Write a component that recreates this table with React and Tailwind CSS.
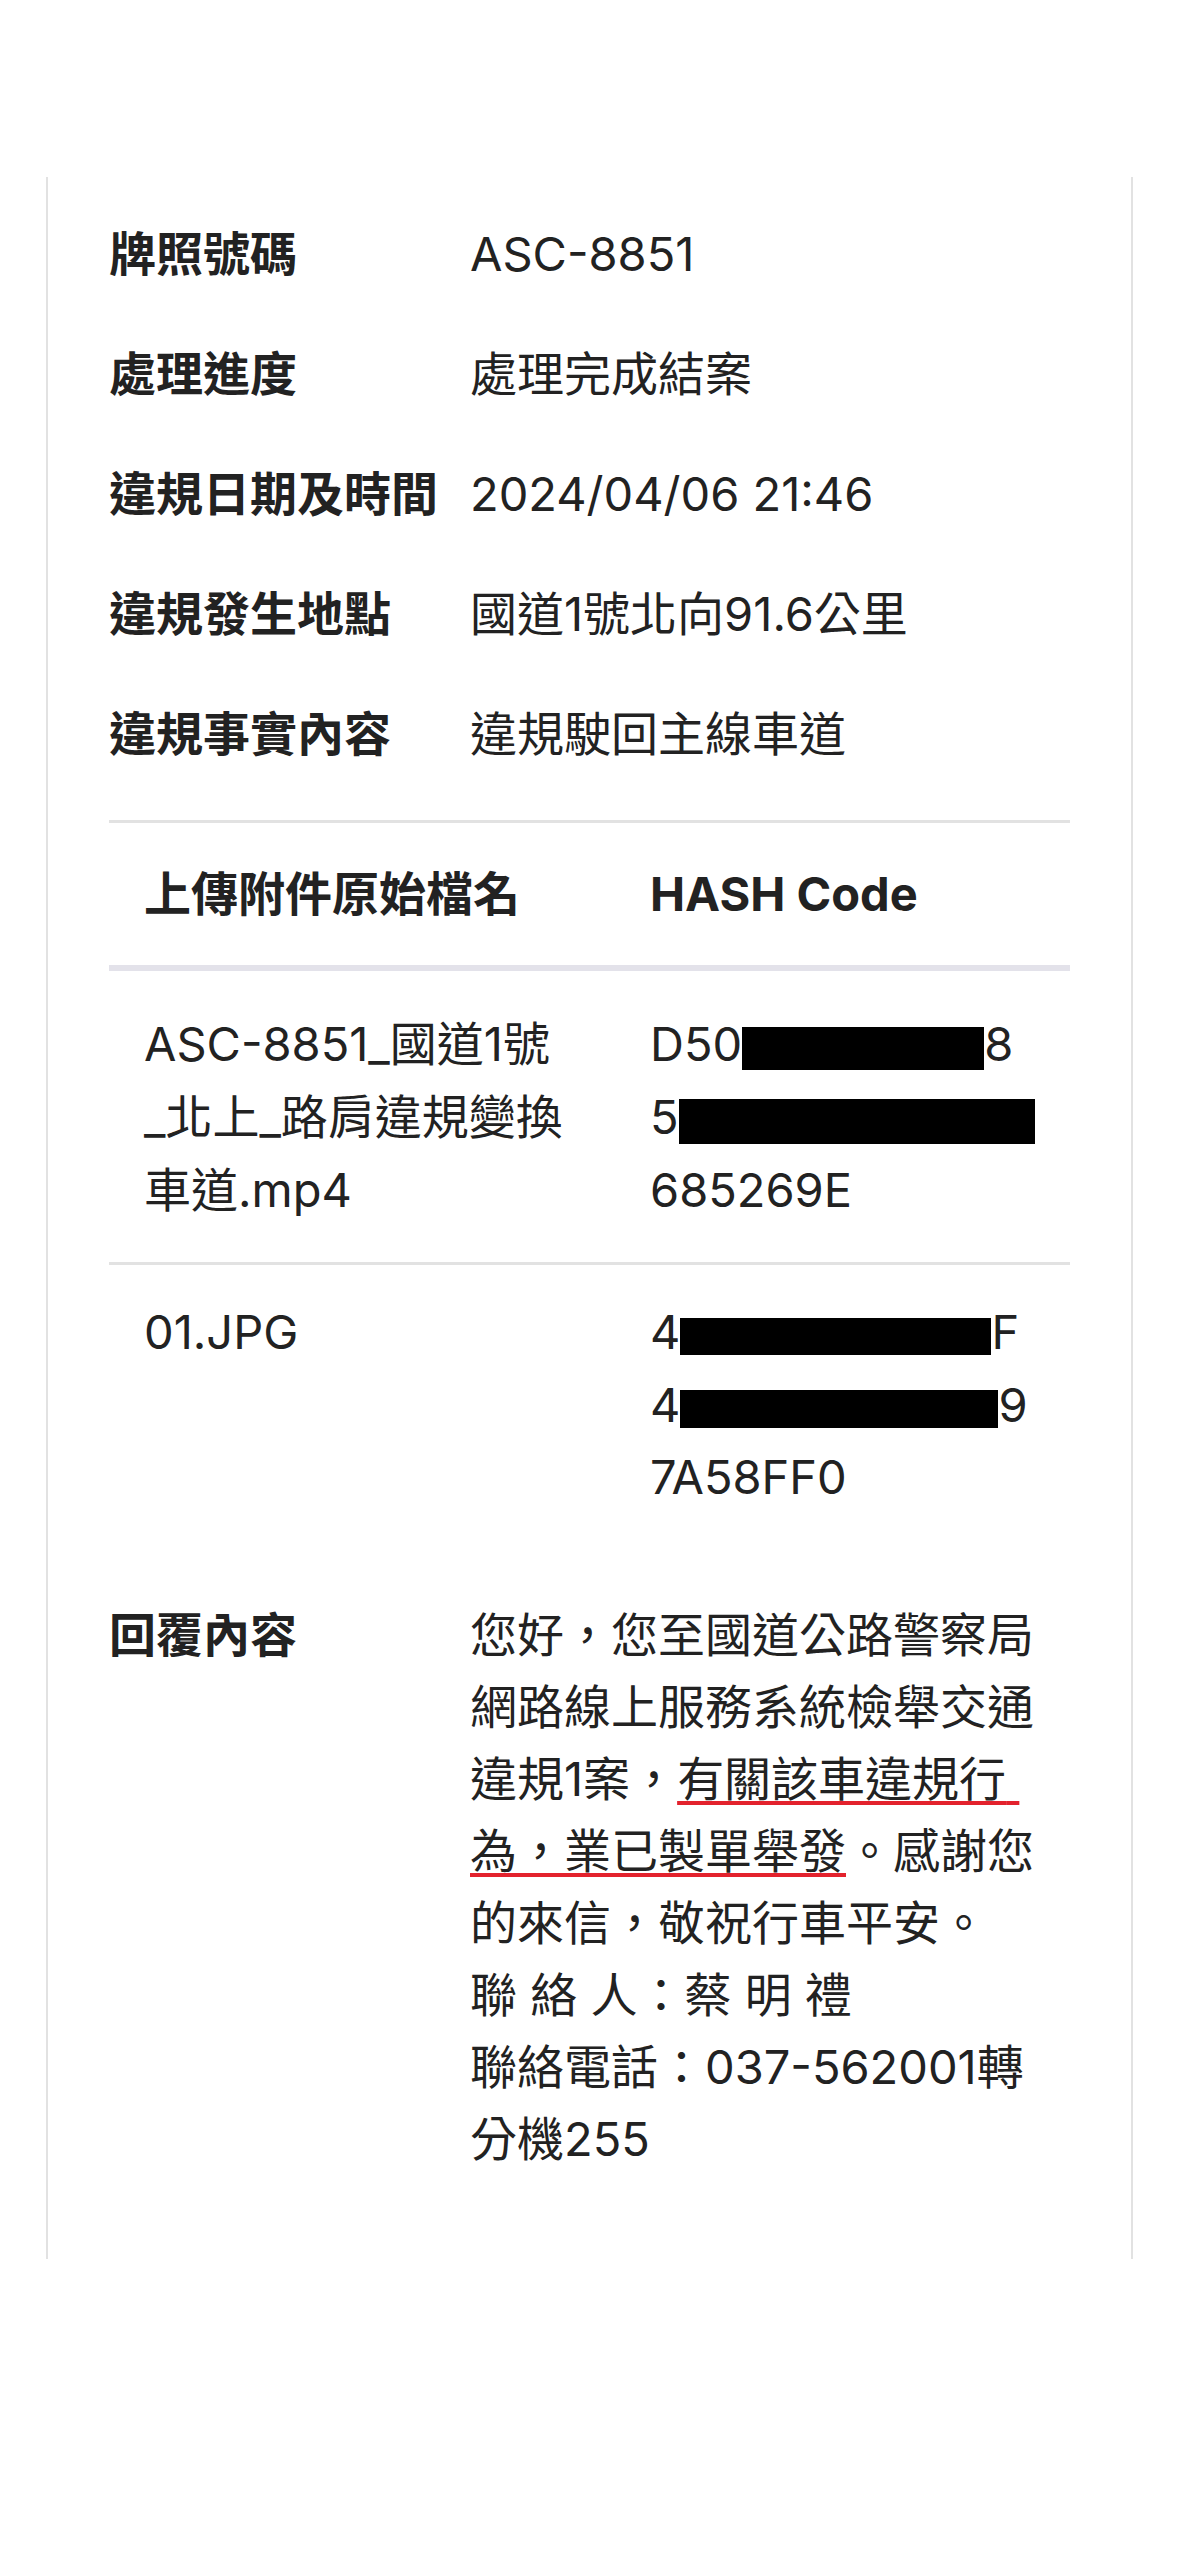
import React from "react";

const font = { fontFamily: 'Inter, "Noto Sans CJK TC", sans-serif' };

// basic case info rows
const infoRows = [
  ["牌照號碼", "ASC-8851"],
  ["處理進度", "處理完成結案"],
  ["違規日期及時間", "2024/04/06 21:46"],
  ["違規發生地點", "國道1號北向91.6公里"],
  ["違規事實內容", "違規駛回主線車道"],
];

function Blackout({ w, h }) {
  return <span className={`inline-block bg-black align-middle ${w} ${h}`} />;
}

const underline =
  "underline decoration-[#e3222d] decoration-[4px] underline-offset-[5px] [text-decoration-skip-ink:none]";

export default function App() {
  return (
    <div className="min-h-screen bg-white pt-[177px] text-[#222222]" style={font}>
      <div className="ml-[46px] w-[1087px] border-x-2 border-[#e2e2e2] px-[61px] pt-[17px] pb-[84px] text-[47px] leading-[72px]">
        {/* info rows */}
        {infoRows.map(([label, value]) => (
          <div key={label} className="grid grid-cols-[361px_1fr] py-[24px]">
            <div className="font-bold whitespace-nowrap">{label}</div>
            <div className="whitespace-nowrap">{value}</div>
          </div>
        ))}

        {/* attachments table */}
        <div className="mt-[26px] h-[3px] bg-[#e2e2e2]" />
        <div className="grid grid-cols-[506px_1fr] font-bold">
          <div className="px-[35px] py-[35px]">上傳附件原始檔名</div>
          <div className="px-[35px] py-[35px]">HASH Code</div>
        </div>
        <div className="h-[6px] bg-[#e3e2ea]" />

        <div className="grid grid-cols-[506px_1fr] leading-[73px]">
          <div className="px-[35px] py-[36px] whitespace-nowrap">
            <div>ASC-8851_國道1號</div>
            <div>_北上_路肩違規變換</div>
            <div>車道.mp4</div>
          </div>
          <div className="px-[35px] py-[36px] whitespace-nowrap">
            <div>
              D50
              <Blackout w="w-[242px]" h="h-[43px]" />8
            </div>
            <div>
              5
              <Blackout w="w-[356px]" h="h-[45px]" />
            </div>
            <div>685269E</div>
          </div>
        </div>
        <div className="h-[3px] bg-[#e2e2e2]" />

        <div className="grid grid-cols-[506px_1fr] leading-[72.5px]">
          <div className="px-[35px] pt-[31px]">01.JPG</div>
          <div className="px-[35px] pt-[31px] whitespace-nowrap">
            <div>
              4
              <Blackout w="w-[311px]" h="h-[37px]" />F
            </div>
            <div>
              4
              <Blackout w="w-[318px]" h="h-[38px]" />9
            </div>
            <div>7A58FF0</div>
          </div>
        </div>

        {/* reply */}
        <div className="mt-[85px] grid grid-cols-[361px_1fr]">
          <div className="font-bold">回覆內容</div>
          <div className="whitespace-nowrap">
            <div>您好，您至國道公路警察局</div>
            <div>網路線上服務系統檢舉交通</div>
            <div>
              違規1案，<span className={underline}>有關該車違規行{"\u00a0"}</span>
            </div>
            <div>
              <span className={underline}>為，業已製單舉發</span>。感謝您
            </div>
            <div>的來信，敬祝行車平安。</div>
            <div>聯 絡 人：蔡 明 禮</div>
            <div>聯絡電話：037-562001轉</div>
            <div>分機255</div>
          </div>
        </div>
      </div>
    </div>
  );
}
